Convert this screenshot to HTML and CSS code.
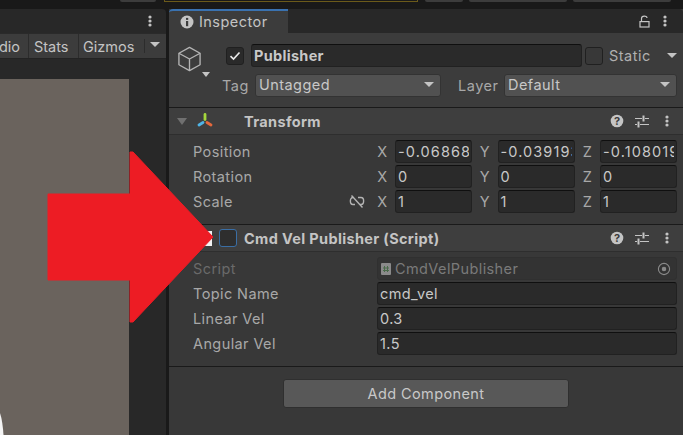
FILE: index.html
```html
<!DOCTYPE html>
<html>
<head>
    <meta charset="UTF-8">
    <meta name="viewport" content="width=device-width, initial-scale=1.0">
    <title>Inspector</title>
    <link rel="stylesheet" href="styles.css">
</head>
<body>
    <div class="top-strip">
        <span class="strip-btn strip-play"></span>
        <span class="strip-box"></span>
        <span class="strip-btn strip-a"></span>
        <span class="strip-btn strip-b"></span>
        <span class="strip-btn strip-c"></span>
    </div>

    <div class="main">
        <div class="scene-panel">
            <div class="scene-tabs">
                <svg class="dots" width="4" height="12" viewBox="0 0 4 12"><circle cx="2" cy="2" r="1.6"/><circle cx="2" cy="6" r="1.6"/><circle cx="2" cy="10" r="1.6"/></svg>
            </div>
            <div class="scene-toolbar">
                <span class="tool tool-audio">dio</span>
                <span class="tool tool-stats">Stats</span>
                <span class="tool tool-gizmos">Gizmos</span>
                <span class="tool-arrow"></span>
            </div>
            <div class="scene-view">
                <div class="game-view">
                    <svg class="view-mark" width="4" height="22" viewBox="0 0 4 22"><path d="M0 0 C2 6 3 14 3.5 22 L0 22 Z" fill="#f4f4f4"/></svg>
                </div>
            </div>
        </div>

        <div class="inspector">
            <div class="insp-tabs">
                <div class="insp-tab">
                    <svg width="14" height="14" viewBox="0 0 14 14"><circle cx="7" cy="7" r="6.5" fill="#c4c4c4"/><rect x="6" y="6" width="2.2" height="5.2" fill="#3c3c3c"/><rect x="6" y="2.9" width="2.2" height="2" fill="#3c3c3c"/></svg>
                    <span>Inspector</span>
                </div>
                <div class="insp-tab-icons">
                    <svg width="11" height="13" viewBox="0 0 11 13" fill="none" stroke="#c4c4c4" stroke-width="1.2"><rect x="1" y="6.6" width="9" height="5.4"/><path d="M2.5 6.6 V3.5 C2.5 0.4 8 0.4 8 3"/></svg>
                    <svg class="dots" width="4" height="12" viewBox="0 0 4 12"><circle cx="2" cy="2" r="1.6"/><circle cx="2" cy="6" r="1.6"/><circle cx="2" cy="10" r="1.6"/></svg>
                </div>
            </div>

            <div class="go-header">
                <div class="go-icon">
                    <svg width="25" height="26" viewBox="0 0 26 27" fill="none" stroke="#b4b4b4" stroke-width="1.4" stroke-linejoin="round"><path d="M13 1.5 L24 7.5 V19.5 L13 25.5 L2 19.5 V7.5 Z"/><path d="M2 7.5 L13 13.5 L24 7.5 M13 13.5 V25.5"/></svg>
                    <span class="go-arrow"></span>
                </div>
                <div class="go-rows">
                    <div class="go-row go-row-name">
                        <span class="check">
                            <svg width="12" height="10" viewBox="0 0 12 10" fill="none" stroke="#e8e8e8" stroke-width="1.7"><path d="M1.5 5.2 L4.5 8 L10.5 1.5"/></svg>
                        </span>
                        <div class="field name-field">Publisher</div>
                        <span class="check static-check"></span>
                        <span class="static-label">Static</span>
                        <span class="arrow static-arrow"></span>
                    </div>
                    <div class="go-row go-row-tag">
                        <span class="tag-label">Tag</span>
                        <div class="dropdown tag-drop">Untagged<span class="arrow"></span></div>
                        <span class="layer-label">Layer</span>
                        <div class="dropdown layer-drop">Default<span class="arrow"></span></div>
                    </div>
                </div>
            </div>

            <div class="comp-header">
                <span class="fold"></span>
                <svg class="transform-icon" width="16" height="16" viewBox="0 0 16 16" fill="none" stroke-width="2.8" stroke-linecap="round"><path d="M8 1.5 V6.5" stroke="#a4d63c"/><path d="M6 9.5 L2 12" stroke="#4fb4e6"/><path d="M10 9.5 L14 12" stroke="#e4683c"/></svg>
                <span class="comp-title">Transform</span>
                <span class="comp-icons">
                    <svg width="14" height="14" viewBox="0 0 14 14"><circle cx="7" cy="7" r="6.3" fill="#c4c4c4"/><text x="7" y="11" text-anchor="middle" class="help-mark">?</text></svg>
                    <svg width="14" height="13" viewBox="0 0 14 13" stroke="#c4c4c4" fill="none"><path d="M0 3.5 H7 M10 3.5 H14 M0 9.5 H2 M5 9.5 H14"/><path d="M8.5 0.5 V6.5 M3.5 6.5 V12.5" stroke-width="2"/></svg>
                    <svg class="dots" width="4" height="12" viewBox="0 0 4 12"><circle cx="2" cy="2" r="1.6"/><circle cx="2" cy="6" r="1.6"/><circle cx="2" cy="10" r="1.6"/></svg>
                </span>
            </div>
            <div class="comp-body transform-body">
                <div class="row">
                    <span class="label">Position</span>
                    <div class="vec">
                        <span class="axis">X</span><div class="field"><span class="clip">-0.068689</span></div>
                        <span class="axis">Y</span><div class="field"><span class="clip">-0.039193</span></div>
                        <span class="axis">Z</span><div class="field"><span class="clip">-0.108019</span></div>
                    </div>
                </div>
                <div class="row">
                    <span class="label">Rotation</span>
                    <div class="vec">
                        <span class="axis">X</span><div class="field">0</div>
                        <span class="axis">Y</span><div class="field">0</div>
                        <span class="axis">Z</span><div class="field">0</div>
                    </div>
                </div>
                <div class="row">
                    <span class="label">Scale</span>
                    <svg class="link-icon" width="16" height="13" viewBox="0 0 16 13" fill="none" stroke="#b4b4b4" stroke-width="1.4"><path d="M5 2.5 H4 C0.5 2.5 0.5 9.5 4 9.5 H6 M9 2.5 H12 C15.5 2.5 15.5 9.5 12 9.5 H11 M2.5 0.5 L13.5 12.5"/></svg>
                    <div class="vec">
                        <span class="axis">X</span><div class="field">1</div>
                        <span class="axis">Y</span><div class="field">1</div>
                        <span class="axis">Z</span><div class="field">1</div>
                    </div>
                </div>
            </div>

            <div class="comp-header comp-header-script">
                <span class="script-mark"></span>
                <span class="check check-focus"></span>
                <span class="comp-title">Cmd Vel Publisher (Script)</span>
                <span class="comp-icons">
                    <svg width="14" height="14" viewBox="0 0 14 14"><circle cx="7" cy="7" r="6.3" fill="#c4c4c4"/><text x="7" y="11" text-anchor="middle" class="help-mark">?</text></svg>
                    <svg width="14" height="13" viewBox="0 0 14 13" stroke="#c4c4c4" fill="none"><path d="M0 3.5 H7 M10 3.5 H14 M0 9.5 H2 M5 9.5 H14"/><path d="M8.5 0.5 V6.5 M3.5 6.5 V12.5" stroke-width="2"/></svg>
                    <svg class="dots" width="4" height="12" viewBox="0 0 4 12"><circle cx="2" cy="2" r="1.6"/><circle cx="2" cy="6" r="1.6"/><circle cx="2" cy="10" r="1.6"/></svg>
                </span>
            </div>
            <div class="comp-body script-body">
                <div class="row row-disabled">
                    <span class="label">Script</span>
                    <div class="field wide-field object-field">
                        <svg width="10" height="12" viewBox="0 0 10 12"><rect width="10" height="12" rx="1" fill="#8a8a8a"/><path d="M3.5 3 V9 M6.5 3 V9 M2 5 H8 M2 7.5 H8" stroke="#4a6a4a" stroke-width="1"/></svg>
                        <span class="object-name">CmdVelPublisher</span>
                        <svg class="picker" width="14" height="14" viewBox="0 0 14 14" fill="none" stroke="#8a8a8a" stroke-width="1.1"><circle cx="7" cy="7" r="5.6"/><circle cx="7" cy="7" r="1.7" fill="#8a8a8a"/></svg>
                    </div>
                </div>
                <div class="row">
                    <span class="label">Topic Name</span>
                    <div class="field wide-field">cmd_vel</div>
                </div>
                <div class="row">
                    <span class="label">Linear Vel</span>
                    <div class="field wide-field">0.3</div>
                </div>
                <div class="row">
                    <span class="label">Angular Vel</span>
                    <div class="field wide-field">1.5</div>
                </div>
            </div>

            <div class="add-area">
                <button class="add-btn">Add Component</button>
            </div>
        </div>
    </div>

    <svg class="red-arrow" width="170" height="172" viewBox="0 0 170 172"><path d="M1 43 H83 V1 H86 L166 86 L86 171 H83 V129 H1 Z" fill="#ed1c24" stroke="#ed1c24" stroke-linejoin="round"/></svg>
</body>
</html>
```

FILE: styles.css
```css
* {
    box-sizing: border-box;
}

html, body {
    height: 100%;
}

body {
    margin: 0;
    width: 683px;
    height: 435px;
    overflow: hidden;
    position: relative;
    display: flex;
    flex-direction: column;
    background: #191919;
    color: #c4c4c4;
    font-family: Inter, "Liberation Sans", sans-serif;
    font-size: 14.5px;
}

svg {
    display: block;
    flex: none;
}

.dots {
    fill: #c4c4c4;
}

/* top strip */
.top-strip {
    height: 9px;
    display: flex;
    align-items: flex-start;
    padding-left: 120px;
}

.strip-btn {
    height: 2px;
    background: #3c3c3c;
    border-radius: 0 0 2px 2px;
}

.strip-play {
    width: 36px;
    margin-right: 8px;
}

.strip-box {
    width: 254px;
    height: 2px;
    margin-right: 7px;
    border-bottom: 1px solid #6b5a1a;
    border-left: 1px solid #6b5a1a;
    border-right: 1px solid #6b5a1a;
}

.strip-a {
    width: 38px;
    margin-right: 6px;
}

.strip-b {
    width: 98px;
    margin-right: 6px;
}

.strip-c {
    width: 98px;
}

.main {
    flex: 1;
    display: flex;
    gap: 3px;
    min-height: 0;
}

/* left panel */
.scene-panel {
    width: 166px;
    display: flex;
    flex-direction: column;
    background: #282828;
    border-radius: 0 4px 0 0;
    overflow: hidden;
}

.scene-tabs {
    height: 24px;
    flex: none;
    display: flex;
    justify-content: flex-end;
    align-items: center;
    padding-right: 14px;
}

.scene-toolbar {
    height: 26px;
    flex: none;
    display: flex;
    align-items: center;
    background: #3c3c3c;
    border-top: 1px solid #2a2a2a;
    border-bottom: 1px solid #232323;
}

.tool {
    height: 100%;
    display: flex;
    align-items: center;
    border-right: 1px solid #2c2c2c;
    color: #c4c4c4;
}

.tool-audio {
    width: 29px;
    justify-content: flex-end;
    padding-right: 8px;
}

.tool-stats {
    width: 50px;
    padding-left: 5px;
}

.tool-gizmos {
    width: 66px;
    padding-left: 4px;
    border-right: none;
    position: relative;
}

.tool-gizmos::after {
    content: "";
    position: absolute;
    right: 0;
    top: 5px;
    bottom: 5px;
    border-right: 1px solid #2c2c2c;
}

.tool-arrow {
    margin-left: 5px;
    margin-bottom: 3px;
    border-left: 5px solid transparent;
    border-right: 5px solid transparent;
    border-top: 5px solid #c4c4c4;
}

.scene-view {
    flex: 1;
    padding: 20px 37px 0 0;
}

.game-view {
    height: 100%;
    background: #6a635d;
    position: relative;
}

.view-mark {
    position: absolute;
    left: 0;
    bottom: 0;
}

/* inspector */
.inspector {
    flex: 1;
    display: flex;
    flex-direction: column;
    background: #383838;
    min-width: 0;
}

.insp-tabs {
    height: 24px;
    flex: none;
    display: flex;
    justify-content: space-between;
    background: #282828;
    border-radius: 4px 4px 0 0;
}

.insp-tab {
    width: 119px;
    display: flex;
    align-items: center;
    gap: 5px;
    padding-left: 11px;
    padding-bottom: 1px;
    background: #3c3c3c;
    border-top: 2px solid #3a72b0;
    border-radius: 4px 0 0 0;
    letter-spacing: 0.45px;
}

.insp-tab-icons {
    display: flex;
    align-items: center;
    gap: 13px;
    padding-right: 16px;
}

.go-header {
    height: 75px;
    flex: none;
    display: flex;
    background: #3c3c3c;
    border-bottom: 1px solid #1a1a1a;
}

.go-icon {
    width: 53px;
    flex: none;
    padding: 13px 0 0 8px;
    position: relative;
}

.go-arrow {
    position: absolute;
    left: 33px;
    top: 39px;
    border-left: 4.5px solid transparent;
    border-right: 4.5px solid transparent;
    border-top: 5px solid #c4c4c4;
}

.go-rows {
    flex: 1;
    padding-top: 11px;
    display: flex;
    flex-direction: column;
    gap: 7px;
}

.go-row {
    display: flex;
    align-items: center;
    height: 23px;
}

.check {
    width: 18px;
    height: 18px;
    flex: none;
    display: flex;
    align-items: center;
    justify-content: center;
    background: #2a2a2a;
    border: 1px solid #202020;
    border-radius: 3px;
}

.go-row-name {
    padding-left: 4px;
}

.go-row-name .field {
    margin-left: 7px;
}

.field {
    flex: none;
    width: 77px;
    height: 23px;
    display: flex;
    align-items: center;
    padding: 0 2px;
    background: #2a2a2a;
    border: 1px solid #212121;
    border-top-color: #0f0f0f;
    border-radius: 3px;
    color: #c8c8c8;
    font-size: 14.5px;
    letter-spacing: 0.4px;
    white-space: nowrap;
    overflow: hidden;
}

.clip {
    display: block;
    width: 100%;
    letter-spacing: 1.1px;
    overflow: hidden;
}

.name-field {
    width: 331px;
    font-weight: 700;
    letter-spacing: 0.3px;
}

.static-check {
    margin-left: 3px;
    background: #383838;
}

.static-label {
    margin-left: 6px;
    color: #b0b0b0;
    letter-spacing: 0.5px;
}

.arrow {
    flex: none;
    border-left: 5px solid transparent;
    border-right: 5px solid transparent;
    border-top: 5px solid #c4c4c4;
}

.static-arrow {
    margin-left: 16px;
}

.tag-label, .layer-label {
    color: #a8a8a8;
    letter-spacing: 0.5px;
}

.tag-label {
    width: 33px;
}

.layer-label {
    width: 46px;
    margin-left: 17px;
}

.dropdown {
    height: 23px;
    display: flex;
    align-items: center;
    justify-content: space-between;
    padding: 0 6px 2px 3px;
    background: #515151;
    border: 1px solid #333;
    border-radius: 3px;
    color: #c8c8c8;
    letter-spacing: 0.45px;
}

.tag-drop {
    width: 186px;
}

.layer-drop {
    width: 173px;
}

.comp-header {
    height: 27px;
    flex: none;
    display: flex;
    align-items: center;
    background: #3e3e3e;
    border-bottom: 1px solid #2e2e2e;
}

.fold {
    margin-left: 8px;
    border-left: 5px solid transparent;
    border-right: 5px solid transparent;
    border-top: 7px solid #707070;
}

.transform-icon {
    margin-left: 10px;
}

.comp-title {
    font-weight: 700;
    color: #c4c4c4;
    letter-spacing: 0.35px;
}

.comp-header .transform-icon + .comp-title {
    margin-left: 31px;
}

.comp-icons {
    margin-left: auto;
    padding-right: 14px;
    display: flex;
    align-items: center;
    gap: 11px;
}

.comp-icons .dots {
    margin-left: 5px;
}

.help-mark {
    font-size: 11px;
    font-weight: 700;
    fill: #3c3c3c;
}

.comp-body {
    padding-left: 24px;
    padding-right: 6px;
    display: flex;
    flex-direction: column;
    gap: 2px;
    border-bottom: 1px solid #1a1a1a;
}

.transform-body {
    height: 90px;
    padding-top: 5px;
}

.script-body {
    height: 115px;
    padding-top: 5px;
}

.row {
    height: 23px;
    display: flex;
    align-items: center;
}

.label {
    color: #a8a8a8;
    letter-spacing: 0.4px;
}

.vec {
    margin-left: auto;
    display: flex;
    align-items: center;
}

.axis {
    width: 25.5px;
    text-align: center;
    color: #a8a8a8;
}

.link-icon {
    margin-left: 116px;
}

.wide-field {
    width: 300px;
    margin-left: auto;
}

.row-disabled .label {
    color: #6a6a6a;
}

.object-field {
    background: #333;
    border-color: #303030;
    gap: 4px;
    padding-left: 3px;
    color: #7a7a7a;
}

.object-name {
    flex: 1;
}

.picker {
    margin-right: 3px;
}

/* the foldout under the arrow */
.comp-header-script {
    background: #3e3e3e;
}

.script-mark {
    width: 9px;
    height: 15px;
    margin-left: 34px;
    background: #f2f2f2;
}

.check-focus {
    margin-left: 7px;
    margin-right: 7px;
    background: #2e2e2e;
    border-color: #3a6ea5;
}

.add-area {
    flex: 1;
    padding: 12px 0 0 114px;
}

.add-btn {
    display: block;
    width: 286px;
    height: 29px;
    padding: 0;
    background: #585858;
    border: 1px solid #2f2f2f;
    border-radius: 3px;
    color: #c8c8c8;
    font-family: inherit;
    font-size: 14.5px;
    letter-spacing: 0.4px;
}

/* annotation drawn over the screenshot */
.red-arrow {
    position: absolute;
    left: 47px;
    top: 151px;
}
```
